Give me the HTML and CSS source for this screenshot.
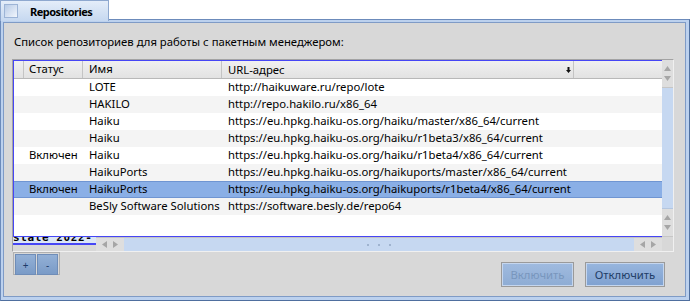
FILE: index.html
```html
<!DOCTYPE html>
<html lang="ru">
<head>
  <meta charset="UTF-8" />
  <title>Repositories</title>
  <link rel="stylesheet" href="styles.css">
</head>
<body>
  <!-- Заголовок окна (вкладка) -->
  <div class="tabbar">
    <div class="tab">
      <span class="tab-box"></span>
      <span class="tab-title">Repositories</span>
    </div>
  </div>

  <div class="window">
    <div class="panel">
      <p class="caption">Список репозиториев для работы с пакетным менеджером:</p>

      <div class="listbox">
        <div class="list-area">
          <div class="list">
            <div class="row head">
              <span class="cell"></span>
              <span class="cell">Статус</span>
              <span class="cell">Имя</span>
              <span class="cell sorted">URL-адрес
                <svg class="sort" viewBox="0 0 5 6" width="5" height="6"><path d="M1.5 0h2v3h1.5L2.5 6 0 3h1.5z" fill="#111"/></svg>
              </span>
              <span class="cell"></span>
            </div>
            <div class="row">
              <span class="cell"></span><span class="cell"></span>
              <span class="cell">LOTE</span>
              <span class="cell">http://haikuware.ru/repo/lote</span><span class="cell"></span>
            </div>
            <div class="row alt">
              <span class="cell"></span><span class="cell"></span>
              <span class="cell">HAKILO</span>
              <span class="cell">http://repo.hakilo.ru/x86_64</span><span class="cell"></span>
            </div>
            <div class="row">
              <span class="cell"></span><span class="cell"></span>
              <span class="cell">Haiku</span>
              <span class="cell">https://eu.hpkg.haiku-os.org/haiku/master/x86_64/current</span><span class="cell"></span>
            </div>
            <div class="row alt">
              <span class="cell"></span><span class="cell"></span>
              <span class="cell">Haiku</span>
              <span class="cell">https://eu.hpkg.haiku-os.org/haiku/r1beta3/x86_64/current</span><span class="cell"></span>
            </div>
            <div class="row">
              <span class="cell"></span><span class="cell">Включен</span>
              <span class="cell">Haiku</span>
              <span class="cell">https://eu.hpkg.haiku-os.org/haiku/r1beta4/x86_64/current</span><span class="cell"></span>
            </div>
            <div class="row alt">
              <span class="cell"></span><span class="cell"></span>
              <span class="cell">HaikuPorts</span>
              <span class="cell">https://eu.hpkg.haiku-os.org/haikuports/master/x86_64/current</span><span class="cell"></span>
            </div>
            <div class="row selected">
              <span class="cell"></span><span class="cell">Включен</span>
              <span class="cell">HaikuPorts</span>
              <span class="cell">https://eu.hpkg.haiku-os.org/haikuports/r1beta4/x86_64/current</span><span class="cell"></span>
            </div>
            <div class="row alt">
              <span class="cell"></span><span class="cell"></span>
              <span class="cell">BeSly Software Solutions</span>
              <span class="cell">https://software.besly.de/repo64</span><span class="cell"></span>
            </div>
          </div>

          <!-- Вертикальная полоса прокрутки -->
          <div class="vscroll">
            <div class="arrows-v">
              <svg viewBox="0 0 7 5" width="7" height="5"><path d="M3.5 0L7 5H0z" fill="#a6a6a6"/></svg>
              <svg viewBox="0 0 7 5" width="7" height="5"><path d="M0 0h7L3.5 5z" fill="#a6a6a6"/></svg>
            </div>
            <div class="track-v"></div>
            <div class="arrows-v">
              <svg viewBox="0 0 7 5" width="7" height="5"><path d="M3.5 0L7 5H0z" fill="#a6a6a6"/></svg>
              <svg viewBox="0 0 7 5" width="7" height="5"><path d="M0 0h7L3.5 5z" fill="#a6a6a6"/></svg>
            </div>
          </div>
        </div>

        <div class="list-bottom">
          <div class="glitch"><span>state 2022-</span></div>
          <div class="hscroll">
            <div class="arrows-h">
              <svg viewBox="0 0 5 7" width="5" height="7"><path d="M0 3.5L5 0v7z" fill="#a6a6a6"/></svg>
              <svg viewBox="0 0 5 7" width="5" height="7"><path d="M0 0l5 3.5L0 7z" fill="#a6a6a6"/></svg>
            </div>
            <div class="track-h"><span class="grip"></span><span class="grip"></span><span class="grip"></span></div>
            <div class="arrows-h">
              <svg viewBox="0 0 5 7" width="5" height="7"><path d="M0 3.5L5 0v7z" fill="#a6a6a6"/></svg>
              <svg viewBox="0 0 5 7" width="5" height="7"><path d="M0 0l5 3.5L0 7z" fill="#a6a6a6"/></svg>
            </div>
          </div>
          <div class="corner"></div>
        </div>
      </div>

      <div class="actions">
        <div class="pm">
          <button class="pm-btn">+</button>
          <button class="pm-btn">-</button>
        </div>
        <div class="buttons">
          <button class="btn btn-on" disabled>Включить</button>
          <button class="btn btn-off">Отключить</button>
        </div>
      </div>
    </div>
  </div>
</body>
</html>
```

FILE: styles.css
```css
* {
  box-sizing: border-box;
}
body {
  margin: 0;
  width: 690px;
  height: 301px;
  overflow: hidden;
  background: #fff;
  font-family: 'Noto Sans', 'DejaVu Sans', sans-serif;
  font-size: 11.3px;
  color: #000;
}
/* Вкладка окна */
.tabbar {
  height: 19px;
  display: flex;
}
.tab {
  width: 109px;
  height: 21px;
  display: flex;
  align-items: center;
  gap: 12px;
  padding-left: 3px;
  border: 1px solid #8ea8cf;
  border-bottom: none;
  background: linear-gradient(#e4edf9, #c6d8f0);
}
.tab-box {
  width: 14px;
  height: 14px;
  border: 1px solid #9db4d6;
  background: linear-gradient(135deg, #b7cbe7, #f2f6fc);
}
.tab-title {
  font-weight: 700;
  font-size: 11px;
  letter-spacing: -0.5px;
}
/* Рамка окна */
.window {
  height: 282px;
  border: 1px solid #6c8bbb;
  border-right-color: #4f6f9f;
  border-bottom-color: #4f6f9f;
  background: #bcd1ee;
  padding: 2px 3px 3px 2px;
}
.panel {
  height: 100%;
  border: 1px solid #7f9bc6;
  background: #d8d8d8;
  padding: 0 0 0 8px;
}
.caption {
  margin: 11px 0 0 2px;
  height: 25px;
  line-height: 16px;
}
/* Список */
.listbox {
  width: 662px;
  border: 1px solid #a3a3a3;
  border-right-color: #f0f0f0;
  border-bottom-color: #f0f0f0;
}
.list-area {
  display: flex;
  height: 177px;
}
.list {
  flex: 1;
  background: #fff;
  border: 1px solid #4646f5;
  border-right: none;
  overflow: hidden;
}
.row {
  display: grid;
  grid-template-columns: 10px 59px 139px 352px 1fr;
  height: 17px;
  line-height: 16px;
  white-space: nowrap;
}
.row .cell {
  padding-left: 6px;
  overflow: hidden;
}
.row .cell:nth-child(2) {
  padding-left: 5px;
}
.row.head {
  height: 18px;
  line-height: 16px;
  background: linear-gradient(#f0f0f0, #e2e2e2);
  border-bottom: 1px solid #b8b8b8;
}
.row.head .cell {
  border-right: 1px solid #c4c4c4;
}
.row.head .cell:first-child {
  padding: 0;
}
.row.head .cell:last-child {
  border-right: none;
}
.cell.sorted {
  display: flex;
  align-items: center;
  justify-content: space-between;
  padding-right: 2px;
}
.row.alt {
  background: #f4f4f4;
}
.row.selected {
  background: #8aafe6;
  box-shadow: inset 0 1px #6f95d2, inset 0 -1px #6f95d2;
}
/* Полосы прокрутки */
.vscroll {
  width: 11px;
  display: flex;
  flex-direction: column;
  background: #dedede;
}
.arrows-v {
  height: 28px;
  display: flex;
  flex-direction: column;
  align-items: center;
  justify-content: space-evenly;
  border-bottom: 1px solid #c6c6c6;
}
.track-v {
  flex: 1;
  background: #c6d8f1;
  border-bottom: 1px solid #b4c6df;
}
.list-bottom {
  display: flex;
  height: 14px;
}
.glitch {
  width: 83px;
  height: 8px;
  overflow: hidden;
  background: #dbe6f6;
  border-bottom: 2px solid #4646f5;
}
.glitch span {
  display: block;
  margin-top: -5px;
  font-family: 'DejaVu Sans Mono', monospace;
  font-weight: 700;
  font-size: 11px;
  line-height: 11px;
  letter-spacing: 0.6px;
  white-space: nowrap;
}
.hscroll {
  flex: 1;
  display: flex;
  background: #dedede;
  border-top: 1px solid #c4c4c4;
}
.arrows-h {
  width: 28px;
  display: flex;
  align-items: center;
  justify-content: space-evenly;
}
.track-h {
  flex: 1;
  display: flex;
  justify-content: center;
  align-items: center;
  gap: 9px;
  background: #c6d8f1;
}
.grip {
  width: 2px;
  height: 2px;
  background: #9fb3cf;
}
.corner {
  width: 11px;
  background: #d8d8d8;
}
/* Кнопки */
.actions {
  display: flex;
  justify-content: space-between;
  width: 653px;
}
.pm {
  display: flex;
  gap: 1px;
  margin-left: 1px;
  padding: 1px;
  border: 1px solid #b0b0b0;
  height: 23px;
}
.pm-btn {
  width: 21px;
  height: 21px;
  padding: 0;
  border: 1px solid #6f8db8;
  background: linear-gradient(#93b0d6, #7a9bc7);
  font-family: 'Noto Sans', sans-serif;
  font-size: 10px;
  color: #1d3c69;
}
.buttons {
  display: flex;
  gap: 11px;
  margin-top: 10px;
}
.btn {
  height: 25px;
  padding: 0;
  border: 1px solid #9a9a9a;
  box-shadow: inset 0 0 0 1px #c5d6ee;
  background: linear-gradient(#98b6de, #7fa1d0);
  font-family: 'Noto Sans', sans-serif;
  font-size: 11.3px;
  color: #1f3d66;
}
.btn-on {
  width: 73px;
}
.btn-off {
  width: 80px;
}
.btn:disabled {
  color: #7896bd;
  background: linear-gradient(#a0bbdf, #8eacd4);
}
```
